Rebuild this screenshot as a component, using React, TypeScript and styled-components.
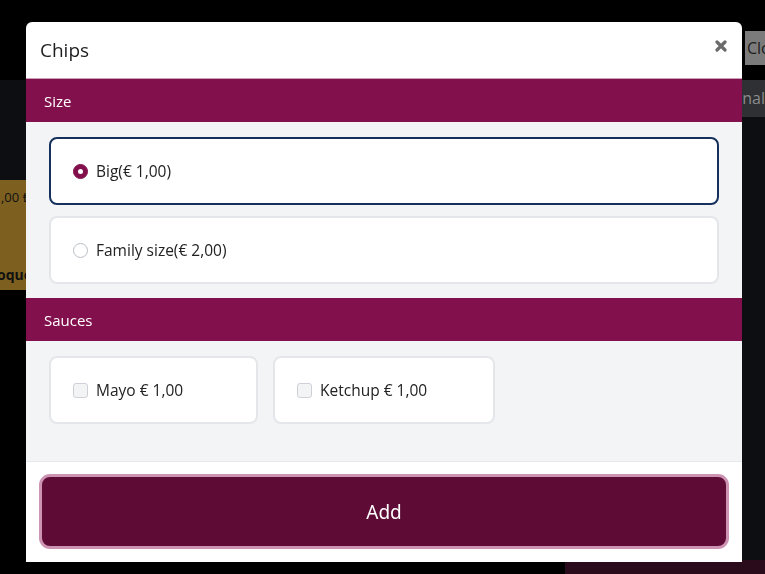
import styled, { createGlobalStyle } from "styled-components";

const GlobalStyle = createGlobalStyle`
  html, body {
    margin: 0;
    padding: 0;
    background: #000;
  }
  * {
    box-sizing: border-box;
  }
`;

const font = `"Open Sans", "Noto Sans", sans-serif`;

const Page = styled.div`
  height: 574px;
  display: grid;
  grid-template-rows: 80px 1fr 14px;
  background: #000;
  font-family: ${font};
  overflow: hidden;
`;

const TopBar = styled.div`
  display: flex;
  justify-content: flex-end;
  padding-top: 31px;
`;

const GhostButton = styled.div`
  width: 20px;
  height: 34px;
  background: #7b7b7b;
  color: #1c1c1c;
  font-size: 16px;
  line-height: 34px;
  padding-left: 2px;
  overflow: hidden;
  white-space: nowrap;
`;

const Backdrop = styled.div`
  display: grid;
  grid-template-columns: 26px 1fr 23px;
  grid-template-rows: 100px 110px 1fr;
  background: #0d0e11;
`;

const ProductCard = styled.div`
  grid-column: 1;
  grid-row: 2;
  background: #7d6020;
  color: #111;
  display: flex;
  flex-direction: column;
  align-items: flex-end;
  justify-content: space-between;
  padding: 8px 0 6px;
  font-size: 13px;
  overflow: hidden;
  white-space: nowrap;
  span {
    margin-right: -4px;
  }
  strong {
    font-size: 14px;
    margin-right: -6px;
  }
`;

const DarkColumn = styled.div`
  grid-column: 1;
  grid-row: 3;
  background: #000;
`;

const SideTab = styled.div`
  grid-column: 3;
  grid-row: 1;
  height: 37px;
  background: #2f3033;
  color: #8c8c8c;
  font-size: 16px;
  line-height: 37px;
  overflow: hidden;
  white-space: nowrap;
  display: flex;
  justify-content: flex-end;
`;

const BottomStrip = styled.div`
  display: grid;
  grid-template-columns: 565px 1fr;
  div:last-child {
    background: #2a0b1c;
  }
`;

const Modal = styled.div`
  position: fixed;
  top: 22px;
  left: 26px;
  width: 716px;
  height: 540px;
  background: #fff;
  border-radius: 6px 6px 0 0;
  display: flex;
  flex-direction: column;
  font-family: ${font};
  overflow: hidden;
`;

const ModalHeader = styled.div`
  height: 57px;
  display: flex;
  align-items: center;
  justify-content: space-between;
  padding: 0 15px 0 14px;
  border-bottom: 1px solid #c9a0b6;
  h2 {
    margin: 0;
    font-size: 19px;
    font-weight: 400;
    color: #1d1d1f;
  }
`;

const CloseButton = styled.button`
  border: 0;
  background: none;
  padding: 0;
  margin-top: -8px;
  color: #6b6b6b;
  display: flex;
`;

const SectionTitle = styled.div`
  height: 43px;
  background: #82104c;
  color: #fff;
  font-size: 15px;
  display: flex;
  align-items: center;
  padding-left: 18px;
`;

const SectionBody = styled.div<{ $row?: boolean; $pb: number }>`
  background: #f3f4f6;
  padding: 15px 23px ${(p) => p.$pb}px;
  display: flex;
  flex-direction: ${(p) => (p.$row ? "row" : "column")};
  gap: ${(p) => (p.$row ? 15 : 11)}px;
`;

const OptionCard = styled.label<{ $active?: boolean; $width?: number }>`
  height: 68px;
  flex-shrink: 0;
  width: ${(p) => (p.$width ? `${p.$width}px` : "auto")};
  background: #fff;
  border: 2px solid ${(p) => (p.$active ? "#16305d" : "#e4e6ea")};
  border-radius: 8px;
  display: flex;
  align-items: center;
  gap: 8px;
  padding-left: 22px;
  font-size: 15.5px;
  color: #222;
`;

const Radio = styled.span<{ $checked?: boolean }>`
  width: 15px;
  height: 15px;
  border-radius: 50%;
  flex-shrink: 0;
  background: ${(p) => (p.$checked ? "#82104c" : "#fff")};
  border: 1px solid ${(p) => (p.$checked ? "#82104c" : "#b9bec6")};
  display: flex;
  align-items: center;
  justify-content: center;
  &::after {
    content: "";
    width: 5px;
    height: 5px;
    border-radius: 50%;
    background: #fff;
    display: ${(p) => (p.$checked ? "block" : "none")};
  }
`;

const Checkbox = styled.span`
  width: 15px;
  height: 15px;
  border-radius: 3px;
  flex-shrink: 0;
  background: #f3f4f6;
  border: 1px solid #cdd1d7;
`;

const Footer = styled.div`
  flex: 1;
  border-top: 1px solid #e6e8eb;
  padding: 12px 13px 13px;
  display: flex;
`;

const AddButton = styled.button`
  flex: 1;
  background: #5e0c36;
  border: 3px solid #cc93b3;
  border-radius: 11px;
  color: #fff;
  font-family: "Noto Sans", sans-serif;
  font-size: 19px;
`;

const sizes = [
  { label: "Big(€ 1,00)", checked: true },
  { label: "Family size(€ 2,00)", checked: false },
];

const sauces = [
  { label: "Mayo € 1,00", width: 209 },
  { label: "Ketchup € 1,00", width: 222 },
];

const App = () => {
  return (
    <>
      <GlobalStyle />
      <Page>
        <TopBar>
          <GhostButton>Close</GhostButton>
        </TopBar>
        <Backdrop>
          <ProductCard>
            <span>€ 1,00 ₺</span>
            <strong>Croque</strong>
          </ProductCard>
          <DarkColumn />
          <SideTab>Optional</SideTab>
        </Backdrop>
        <BottomStrip>
          <div />
          <div />
        </BottomStrip>
      </Page>
      <Modal>
        <ModalHeader>
          <h2>Chips</h2>
          <CloseButton aria-label="close">
            <svg width="12" height="12" viewBox="0 0 12 12">
              <path d="M2 2 L10 10 M10 2 L2 10" stroke="currentColor" strokeWidth="3.2" strokeLinecap="round" />
            </svg>
          </CloseButton>
        </ModalHeader>
        <SectionTitle>Size</SectionTitle>
        <SectionBody $pb={14}>
          {sizes.map((s) => (
            <OptionCard key={s.label} $active={s.checked}>
              <Radio $checked={s.checked} />
              {s.label}
            </OptionCard>
          ))}
        </SectionBody>
        <SectionTitle>Sauces</SectionTitle>
        <SectionBody $row $pb={37}>
          {sauces.map((s) => (
            <OptionCard key={s.label} $width={s.width}>
              <Checkbox />
              {s.label}
            </OptionCard>
          ))}
        </SectionBody>
        <Footer>
          <AddButton>Add</AddButton>
        </Footer>
      </Modal>
    </>
  );
};

export default App;
